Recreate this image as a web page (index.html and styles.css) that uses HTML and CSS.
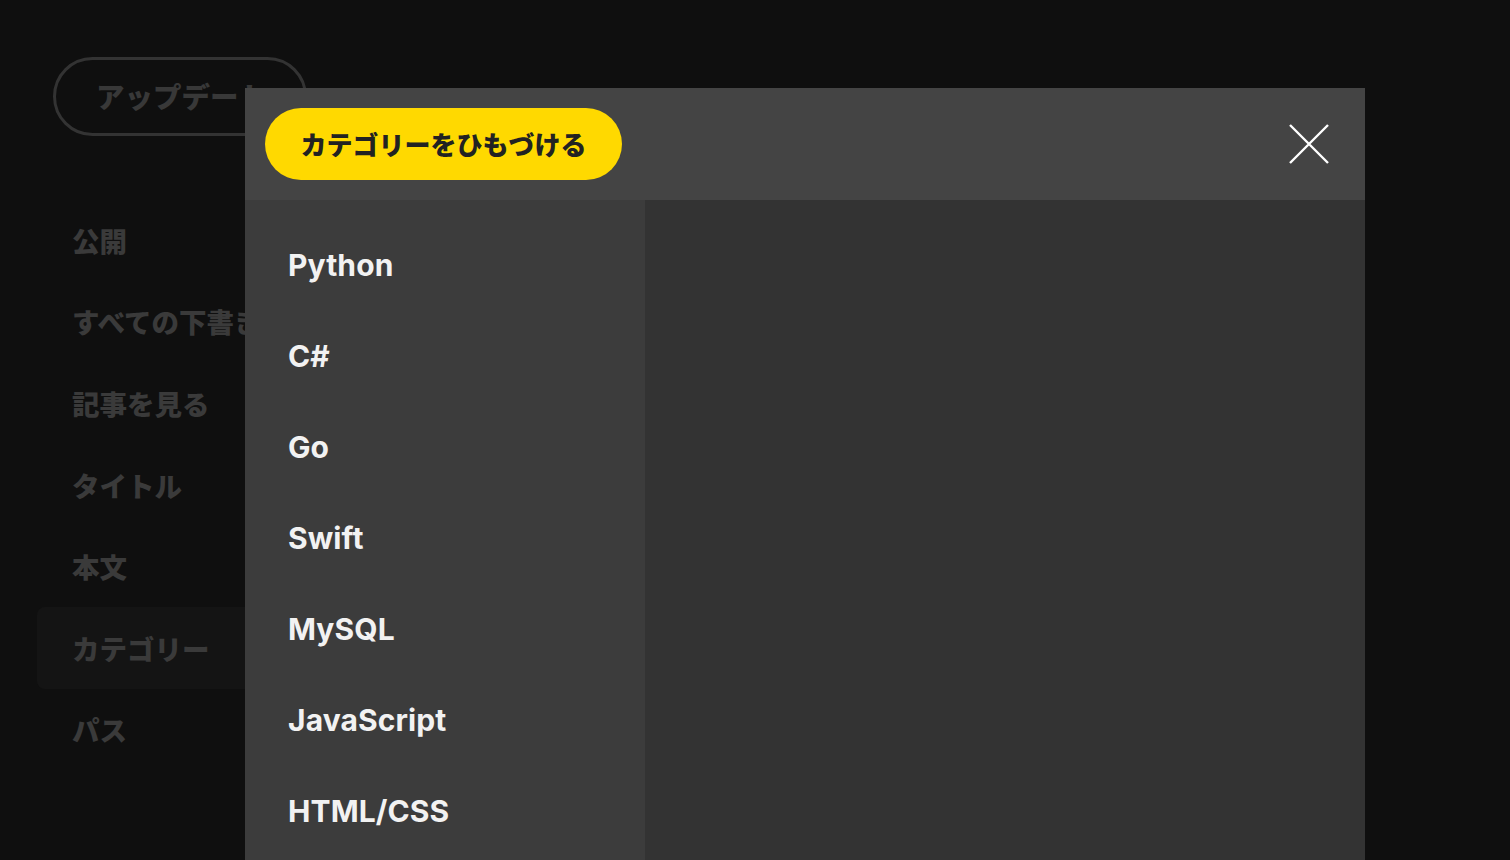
FILE: index.html
```html
<!DOCTYPE html>
<html lang="ja">
<head>
<meta charset="utf-8">
<title>カテゴリー</title>
<link rel="stylesheet" href="styles.css">
</head>
<body>
<div class="page">
  <div class="top">
    <button class="update-btn">アップデート</button>
  </div>
  <nav class="side">
    <div class="side-item">公開</div>
    <div class="side-item">すべての下書き</div>
    <div class="side-item">記事を見る</div>
    <div class="side-item">タイトル</div>
    <div class="side-item">本文</div>
    <div class="side-item active">カテゴリー</div>
    <div class="side-item">パス</div>
  </nav>
</div>

<div class="modal">
  <div class="modal-head">
    <button class="link-btn">カテゴリーをひもづける</button>
    <button class="close-btn" aria-label="閉じる">
      <svg width="40" height="40" viewBox="0 0 40 40"><path d="M1 1 L39 39 M39 1 L1 39" stroke="#ffffff" stroke-width="2.4" fill="none"/></svg>
    </button>
  </div>
  <div class="modal-body">
    <ul class="cat-list">
      <li>Python</li>
      <li>C#</li>
      <li>Go</li>
      <li>Swift</li>
      <li>MySQL</li>
      <li>JavaScript</li>
      <li>HTML/CSS</li>
    </ul>
    <div class="cat-detail"></div>
  </div>
</div>
</body>
</html>
```

FILE: styles.css
```css
html, body {
  margin: 0;
  padding: 0;
  height: 100%;
  overflow: hidden;
}
body {
  background: #0f0f0f;
  font-family: "Noto Sans CJK JP", "Noto Sans", sans-serif;
}
.page {
  padding: 57px 0 0 37px;
}
.top {
  padding-left: 16px;
}
.update-btn {
  box-sizing: border-box;
  height: 79px;
  width: 254px;
  border: 3px solid #333333;
  border-radius: 40px;
  background: transparent;
  color: #383838;
  font-family: "Noto Sans CJK JP", sans-serif;
  font-weight: 900;
  font-size: 28.5px;
  padding: 0 0 0 40px;
  text-align: left;
  line-height: 1;
}
.side {
  margin-top: 63px;
  width: 260px;
}
.side-item {
  height: 81.6px;
  display: flex;
  align-items: center;
  padding-left: 35px;
  color: #3a3a3a;
  font-weight: 900;
  font-size: 27.5px;
  white-space: nowrap;
  border-radius: 8px;
}
.side-item.active {
  background: #141414;
}
.modal {
  position: absolute;
  left: 245px;
  top: 88px;
  width: 1120px;
  bottom: 0;
  display: flex;
  flex-direction: column;
}
.modal-head {
  height: 112px;
  background: #444444;
  display: flex;
  align-items: center;
  justify-content: space-between;
  padding: 0 36px 0 20px;
}
.link-btn {
  width: 357px;
  height: 72px;
  border: none;
  border-radius: 36px;
  background: #ffd900;
  color: #222222;
  font-family: "Noto Sans CJK JP", sans-serif;
  font-weight: 900;
  font-size: 26px;
  padding: 0;
  line-height: 1;
}
.close-btn {
  width: 40px;
  height: 40px;
  padding: 0;
  border: none;
  background: transparent;
  display: block;
}
.close-btn svg {
  display: block;
}
.modal-body {
  flex: 1;
  display: flex;
}
.cat-list {
  list-style: none;
  margin: 0;
  padding: 19px 0 0 0;
  width: 400px;
  background: #3c3c3c;
}
.cat-list li {
  height: 91px;
  display: flex;
  align-items: center;
  padding-left: 43px;
  color: #f2f2f2;
  font-family: "Inter", "Noto Sans", sans-serif;
  font-weight: 700;
  font-size: 30px;
  letter-spacing: 0.1px;
}
.cat-detail {
  flex: 1;
  background: #333333;
}
```
